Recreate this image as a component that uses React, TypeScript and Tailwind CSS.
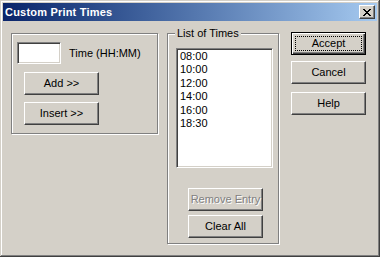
import React from "react";

const font = { fontFamily: '"Liberation Sans", Arial, sans-serif' };

const btn =
  "flex items-center justify-center w-[75px] h-[23px] bg-[#d4d0c8] border border-t-white border-l-white border-r-[#404040] border-b-[#404040] shadow-[inset_-1px_-1px_0_#808080] text-[11px] text-black";

const Button = ({ label, disabled }: { label: string; disabled?: boolean }) => (
  <button className={btn}>
    <span
      className={
        disabled ? "text-[#808080] [text-shadow:1px_1px_0_#ffffff]" : ""
      }
    >
      {label}
    </span>
  </button>
);

const times = ["08:00", "10:00", "12:00", "14:00", "16:00", "18:30"];

export default function App() {
  return (
    <div
      style={font}
      className="w-[380px] h-[257px] bg-[#d4d0c8] p-[3px] shadow-[inset_-1px_-1px_0_#404040,inset_1px_1px_0_#d4d0c8,inset_-2px_-2px_0_#808080,inset_2px_2px_0_#ffffff] text-[11px] text-black select-none"
    >
      {/* title bar */}
      <div className="h-[18px] flex items-center justify-between pl-[2px] pr-[2px] bg-gradient-to-r from-[#0a246a] to-[#a6caf0]">
        <span className="text-white font-bold text-[11px] tracking-[0.2px]">
          Custom Print Times
        </span>
        <button className="w-[16px] h-[14px] flex items-center justify-center bg-[#d4d0c8] border border-t-white border-l-white border-r-[#404040] border-b-[#404040] shadow-[inset_-1px_-1px_0_#808080]">
          <svg width="8" height="7" viewBox="0 0 8 7" shapeRendering="crispEdges">
            <path
              d="M0 0h2v1h-2zM6 0h2v1h-2zM1 1h2v1h-2zM5 1h2v1h-2zM2 2h4v1h-4zM3 3h2v1h-2zM2 4h4v1h-4zM1 5h2v1h-2zM5 5h2v1h-2zM0 6h2v1h-2zM6 6h2v1h-2z"
              fill="#000"
            />
          </svg>
        </button>
      </div>

      <div className="flex items-start pl-[8px] pt-[12px]">
        {/* left group */}
        <div className="w-[147px] h-[101px] border border-[#808080] shadow-[inset_1px_1px_0_#ffffff,1px_1px_0_#ffffff] pl-[5px] pt-[8px]">
          <div className="flex items-center">
            <div className="w-[44px] h-[22px] bg-white border border-t-[#808080] border-l-[#808080] border-r-white border-b-white shadow-[inset_1px_1px_0_#404040,inset_-1px_-1px_0_#d4d0c8]" />
            <span className="ml-[8px]">Time (HH:MM)</span>
          </div>
          <div className="flex flex-col gap-[7px] ml-[7px] mt-[8px]">
            <Button label="Add >>" />
            <Button label="Insert >>" />
          </div>
        </div>

        {/* right group */}
        <div className="relative ml-[9px] w-[112px] h-[211px] border border-[#808080] shadow-[inset_1px_1px_0_#ffffff,1px_1px_0_#ffffff] pl-[8px] pt-[14px]">
          <span className="absolute left-[7px] top-[-8px] bg-[#d4d0c8] px-[2px] leading-[14px]">
            List of Times
          </span>
          <div className="w-[97px] h-[120px] bg-white border border-t-[#808080] border-l-[#808080] border-r-white border-b-white shadow-[inset_1px_1px_0_#404040,inset_-1px_-1px_0_#d4d0c8] px-[3px] py-[1px]">
            {times.map((t) => (
              <div key={t} className="leading-[13.4px]">
                {t}
              </div>
            ))}
          </div>
          <div className="flex flex-col gap-[4px] ml-[12px] mt-[20px]">
            <Button label="Remove Entry" disabled />
            <Button label="Clear All" />
          </div>
        </div>

        {/* action buttons */}
        <div className="flex flex-col ml-[12px] -mt-[1px]">
          <button className="w-[75px] h-[23px] p-[3px] bg-[#d4d0c8] border border-black shadow-[inset_1px_1px_0_#ffffff,inset_-1px_-1px_0_#404040,inset_-2px_-2px_0_#808080] text-[11px]">
            <span className="flex items-center justify-center w-full h-full border border-dotted border-black">
              Accept
            </span>
          </button>
          <div className="mt-[6px]">
            <Button label="Cancel" />
          </div>
          <div className="mt-[8px]">
            <Button label="Help" />
          </div>
        </div>
      </div>
    </div>
  );
}
